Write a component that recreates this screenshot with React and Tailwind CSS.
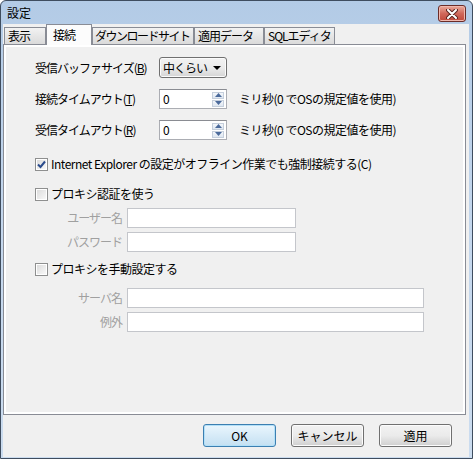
import React from "react";

const Arrow = ({ up }) => (
  <svg width="7" height="4" viewBox="0 0 7 4">
    <path d={up ? "M0 4 L3.5 0 L7 4 Z" : "M0 0 L3.5 4 L7 0 Z"} fill="#4b6a9b" />
  </svg>
);

function Spinner({ value }) {
  return (
    <div className="w-[68px] h-[20px] bg-white border border-[#abadb3] border-t-[#8a8c92] flex shrink-0">
      <div className="flex-1 pl-[3px] leading-[18px]">{value}</div>
      <div className="w-[14px] flex flex-col justify-center gap-[1px] pr-[2px]">
        <div className="h-[7px] flex items-center justify-center border border-[#c5cfdc] bg-gradient-to-b from-[#f4f7fb] to-[#dfe7f1]">
          <Arrow up />
        </div>
        <div className="h-[7px] flex items-center justify-center border border-[#c5cfdc] bg-gradient-to-b from-[#f4f7fb] to-[#dfe7f1]">
          <Arrow />
        </div>
      </div>
    </div>
  );
}

function Checkbox({ checked }) {
  return (
    <div className="w-[13px] h-[13px] border border-[#8e8f8f] bg-white p-[1px] shrink-0">
      <div className="w-full h-full bg-gradient-to-br from-[#dcdcdc] to-[#f8f8f8] flex items-center justify-center">
        {checked && (
          <svg width="9" height="9" viewBox="0 0 9 9">
            <path d="M1 4.5 L3.5 7 L8 1.5" stroke="#2a4b8c" strokeWidth="2" fill="none" />
          </svg>
        )}
      </div>
    </div>
  );
}

function Field({ label, width }) {
  return (
    <div className="flex items-center h-[20px]">
      <div className="w-[88px] text-right text-[#a0a0a0] pr-[1px] tracking-[-1px] whitespace-nowrap">{label}</div>
      <div className={`ml-[4px] h-[20px] bg-white border border-[#c4c6cb] ${width}`} />
    </div>
  );
}

function Tab({ label, active, w, tight }) {
  if (active) {
    return (
      <div
        className={`${w} h-[21px] -mb-px relative z-10 bg-[#fcfcfc] border border-b-0 border-[#898c95] pl-[6px] leading-[19px] tracking-[-1px] whitespace-nowrap`}
      >
        {label}
      </div>
    );
  }
  return (
    <div
      className={`${w} h-[17px] border border-b-0 border-[#898c95] bg-gradient-to-b from-[#f2f2f2] to-[#dadada] leading-[16px] whitespace-nowrap overflow-hidden ${
        tight ? "px-[2px] tracking-[-1.5px]" : "px-[3px] tracking-[-1px]"
      }`}
    >
      {label}
    </div>
  );
}

function Button({ children, primary }) {
  return (
    <div
      className={`w-[73px] h-[23px] rounded-[3px] border flex items-center justify-center ${
        primary
          ? "border-[#3c7fb1] bg-gradient-to-b from-[#eaf6fd] to-[#c4e0f2] shadow-[inset_0_0_0_1px_#b3e0f8]"
          : "border-[#707070] bg-gradient-to-b from-[#f2f2f2] via-[#ebebeb] to-[#cfcfcf] shadow-[inset_0_0_0_1px_#fcfcfc]"
      }`}
    >
      {children}
    </div>
  );
}

export default function App() {
  return (
    <div className="w-[473px] h-[459px] font-['Noto_Sans_CJK_JP',sans-serif] text-[12px] text-black">
      <div className="w-full h-full flex flex-col border border-[#3f4d5f] rounded-t-[6px] bg-gradient-to-b from-[#b3cbe6] via-[#c4d7ed] to-[#cbdcef]">
        {/* title bar */}
        <div className="h-[23px] flex items-start justify-between pl-[6px] pr-[6px]">
          <div className="mt-[4px] leading-[16px]">設定</div>
          <div className="mt-[4px] w-[28px] h-[17px] rounded-[3px] border border-[#6b2c28] bg-gradient-to-b from-[#e9a99b] via-[#d0685b] to-[#c0483b] flex items-center justify-center shadow-[inset_0_0_0_1px_#f0b8ae]">
            <svg width="12" height="10" viewBox="0 0 12 10">
              <path d="M2 1 L10 9 M10 1 L2 9" stroke="#5a2420" strokeWidth="4" strokeLinecap="round" />
              <path d="M2 1 L10 9 M10 1 L2 9" stroke="#ffffff" strokeWidth="2" strokeLinecap="round" />
            </svg>
          </div>
        </div>

        {/* client area */}
        <div className="flex-1 ml-[2px] mr-[3px] mb-[1px] bg-[#f0f0f0] flex flex-col">
          <div className="h-[20px] flex items-end pl-[1px]">
            <Tab label="表示" w="w-[42px]" />
            <Tab label="接続" w="w-[46px]" active />
            <Tab label="ダウンロードサイト" w="w-[102px]" tight />
            <Tab label="適用データ" w="w-[70px]" />
            <Tab label="SQLエディタ" w="w-[71px]" />
          </div>

          <div className="w-[463px] h-[371px] border border-[#898c95] bg-white p-[2px]">
            <div className="w-full h-full bg-[#f0f0f0] flex flex-col pl-[29px]">
              <div className="mt-[10px] h-[21px] flex items-center">
                <div className="w-[124px] tracking-[-1px] whitespace-nowrap">
                  受信バッファサイズ(<span className="underline">B</span>)
                </div>
                <div className="w-[68px] h-[21px] rounded-[3px] border border-[#707070] bg-gradient-to-b from-[#f2f2f2] via-[#ebebeb] to-[#d5d5d5] flex items-center justify-between pl-[3px] pr-[5px] shadow-[inset_0_0_0_1px_#fbfbfb]">
                  <span className="tracking-[-1px]">中くらい</span>
                  <svg width="8" height="4" viewBox="0 0 8 4">
                    <path d="M0 0 L8 0 L4 4 Z" fill="#000" />
                  </svg>
                </div>
              </div>

              <div className="mt-[11px] h-[20px] flex items-center">
                <div className="w-[124px] tracking-[-1px] whitespace-nowrap">
                  接続タイムアウト(<span className="underline">T</span>)
                </div>
                <Spinner value="0" />
                <div className="ml-[12px] tracking-[-0.5px] whitespace-nowrap">ミリ秒(0 でOSの規定値を使用)</div>
              </div>

              <div className="mt-[11px] h-[20px] flex items-center">
                <div className="w-[124px] tracking-[-1px] whitespace-nowrap">
                  受信タイムアウト(<span className="underline">R</span>)
                </div>
                <Spinner value="0" />
                <div className="ml-[12px] tracking-[-0.5px] whitespace-nowrap">ミリ秒(0 でOSの規定値を使用)</div>
              </div>

              <div className="mt-[16px] h-[16px] flex items-center gap-[3px]">
                <Checkbox checked />
                <div className="tracking-[-0.5px] whitespace-nowrap">Internet Explorer の設定がオフライン作業でも強制接続する(C)</div>
              </div>

              <div className="mt-[14px] h-[16px] flex items-center gap-[3px]">
                <Checkbox />
                <div className="tracking-[-0.5px]">プロキシ認証を使う</div>
              </div>

              <div className="mt-[6px]">
                <Field label="ユーザー名" width="w-[169px]" />
              </div>
              <div className="mt-[4px]">
                <Field label="パスワード" width="w-[169px]" />
              </div>

              <div className="mt-[9px] h-[16px] flex items-center gap-[3px]">
                <Checkbox />
                <div className="tracking-[-0.5px]">プロキシを手動設定する</div>
              </div>

              <div className="mt-[11px]">
                <Field label="サーバ名" width="w-[297px]" />
              </div>
              <div className="mt-[4px]">
                <Field label="例外" width="w-[297px]" />
              </div>
            </div>
          </div>

          <div className="mt-[9px] flex justify-end gap-[15px] pr-[17px]">
            <Button primary>OK</Button>
            <Button>キャンセル</Button>
            <Button>適用</Button>
          </div>
        </div>
      </div>
    </div>
  );
}
